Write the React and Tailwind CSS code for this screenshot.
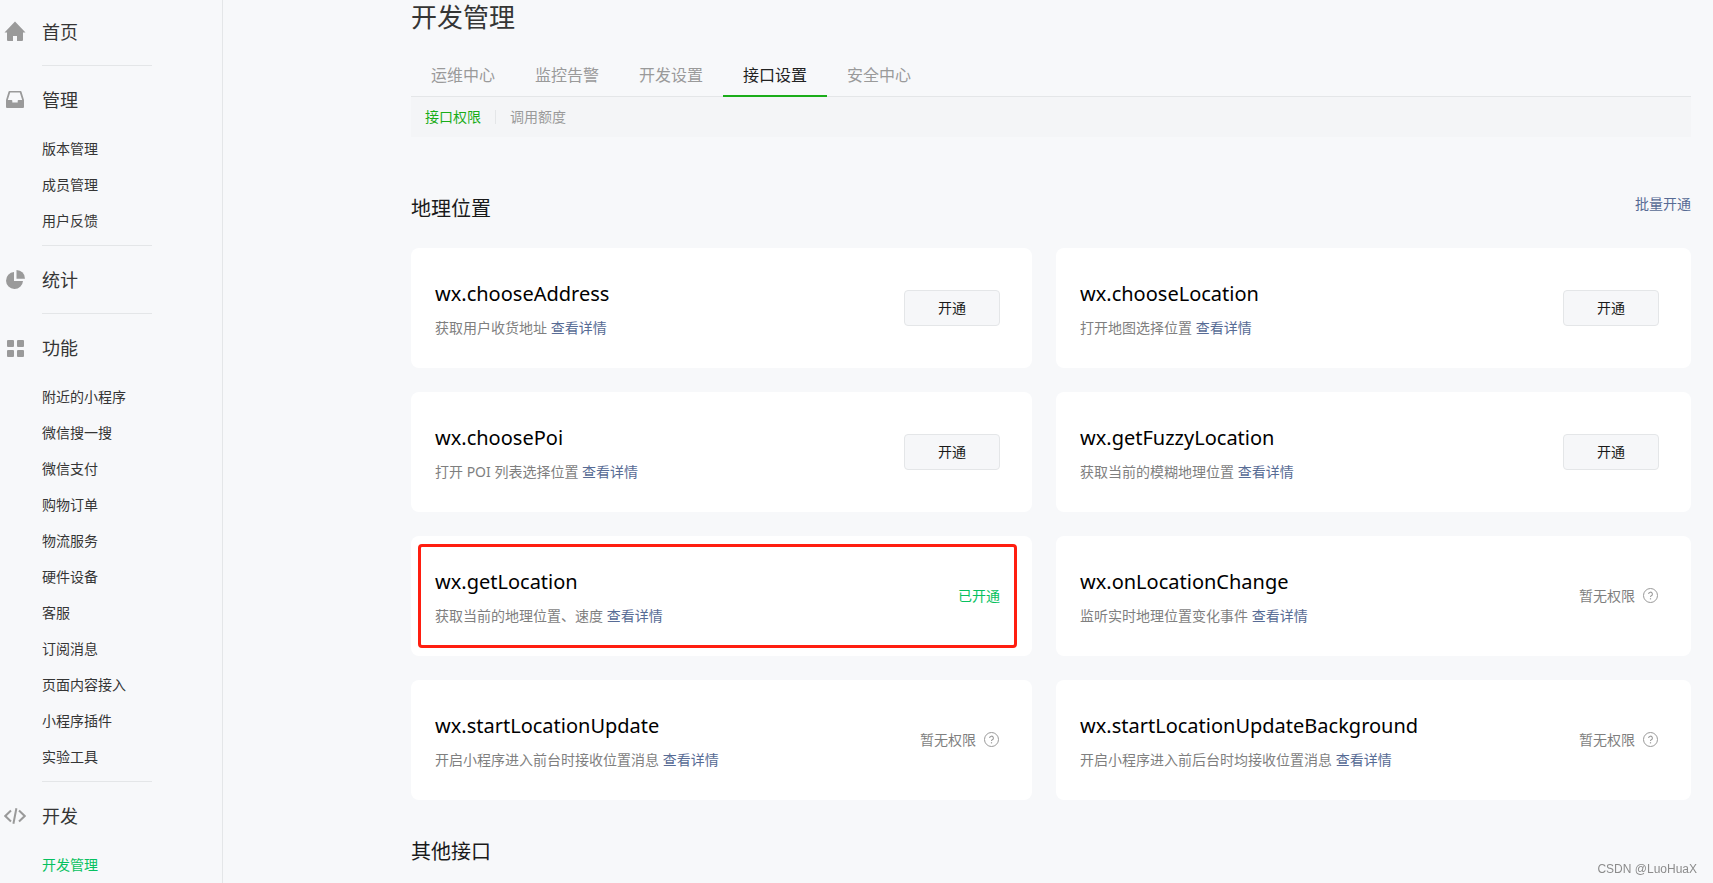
import React, { useState } from "react";

const menu = [
  { title: "首页", icon: HomeIcon, items: [] },
  { title: "管理", icon: InboxIcon, items: ["版本管理", "成员管理", "用户反馈"] },
  { title: "统计", icon: PieIcon, items: [] },
  {
    title: "功能",
    icon: GridIcon,
    items: [
      "附近的小程序",
      "微信搜一搜",
      "微信支付",
      "购物订单",
      "物流服务",
      "硬件设备",
      "客服",
      "订阅消息",
      "页面内容接入",
      "小程序插件",
      "实验工具",
    ],
  },
  { title: "开发", icon: CodeIcon, items: ["开发管理"] },
];

const tabs = ["运维中心", "监控告警", "开发设置", "接口设置", "安全中心"];

// status: "off" | "on" | "denied"
const apis = [
  { name: "wx.chooseAddress", desc: "获取用户收货地址", status: "off" },
  { name: "wx.chooseLocation", desc: "打开地图选择位置", status: "off" },
  { name: "wx.choosePoi", desc: "打开 POI 列表选择位置", status: "off" },
  { name: "wx.getFuzzyLocation", desc: "获取当前的模糊地理位置", status: "off" },
  { name: "wx.getLocation", desc: "获取当前的地理位置、速度", status: "on", marked: true },
  { name: "wx.onLocationChange", desc: "监听实时地理位置变化事件", status: "denied" },
  { name: "wx.startLocationUpdate", desc: "开启小程序进入前台时接收位置消息", status: "denied" },
  { name: "wx.startLocationUpdateBackground", desc: "开启小程序进入前后台时均接收位置消息", status: "denied" },
];

function HomeIcon() {
  return (
    <svg width="22" height="22" viewBox="0 0 22 22" fill="#9a9a9a">
      <path d="M11 .5 21.500 11.500H19V19a1 1 0 0 1-1 1h-5v-5H9v5H4a1 1 0 0 1-1-1v-7.500H.5z" />
    </svg>
  );
}

function InboxIcon() {
  return (
    <svg width="22" height="22" viewBox="0 0 22 22" fill="#9a9a9a" fillRule="evenodd">
      <path d="M5.500 2h11a1 1 0 0 1 1 .8L20 11v7a1 1 0 0 1-1 1H3a1 1 0 0 1-1-1v-7l2.500-8.200a1 1 0 0 1 1-.8zM6.200 3.500 3.800 11H7.500a.8.8 0 0 1 .8.8v1.700h5.400v-1.700a.8.8 0 0 1 .8-.8h3.700L15.800 3.500z" />
    </svg>
  );
}

function PieIcon() {
  return (
    <svg width="22" height="22" viewBox="0 0 22 22" fill="#9a9a9a">
      <path d="M10 3v9h9a8.500 8.500 0 1 1-9-9z" />
      <path d="M12.500 1A8.500 8.500 0 0 1 21 9.800h-8.500z" />
    </svg>
  );
}

function GridIcon() {
  return (
    <svg width="22" height="22" viewBox="0 0 22 22" fill="#9a9a9a">
      <rect x="3" y="3" width="7" height="7" rx="1" />
      <rect x="13" y="3" width="7" height="7" rx="1" />
      <rect x="3" y="13" width="7" height="7" rx="1" />
      <rect x="13" y="13" width="7" height="7" rx="1" />
    </svg>
  );
}

function CodeIcon() {
  return (
    <svg width="22" height="22" viewBox="0 0 22 22" fill="none" stroke="#9a9a9a" strokeWidth="2">
      <path d="M7 5.500 1.300 11 7 16.500M15 5.500l5.700 5.500-5.700 5.500M12.400 3.200l-3 15.600" />
    </svg>
  );
}

function HelpIcon() {
  return (
    <svg width="16" height="16" viewBox="0 0 16 16" fill="none" stroke="#9a9a9a">
      <circle cx="7.500" cy="7.500" r="7" />
      <path d="M5.600 6a1.900 1.900 0 1 1 2.700 1.800c-.6.300-.8.500-.8 1.200" strokeWidth="1.100" />
      <path d="M7.500 10.200v1.200" strokeWidth="1.200" />
    </svg>
  );
}

function Status({ status }) {
  if (status === "on") return <span className="text-sm text-[#07c160]">已开通</span>;
  if (status === "denied") {
    return (
      <span className="flex items-center gap-2 text-sm text-[#7f7f7f]">
        暂无权限 <HelpIcon />
      </span>
    );
  }
  return (
    <button className="h-9 w-24 rounded-sm border border-[#e4e6e8] bg-[#f6f7f9] text-sm text-[#1a1a1a]">
      开通
    </button>
  );
}

function ApiCard({ api }) {
  return (
    <div className="relative flex h-[120px] items-center justify-between rounded-lg bg-white pr-8 pl-6">
      <div className="pt-0.5">
        <h3 className="text-xl leading-8 text-black">{api.name}</h3>
        <p className="mt-1.5 text-sm leading-6 text-[#7f7f7f]">
          {api.desc} <a href="#" className="text-[#576b95]">查看详情</a>
        </p>
      </div>
      <Status status={api.status} />
      {api.marked && (
        <div className="pointer-events-none absolute inset-y-2 right-[15px] left-[7px] rounded-sm border-3 border-[#ff1e10]" />
      )}
    </div>
  );
}

export default function App() {
  const [tab, setTab] = useState("接口设置");

  return (
    <div className="flex h-screen bg-[#f7f8fa] font-['Noto_Sans','Noto_Sans_CJK_SC',sans-serif] text-[#353535]">
      {/* Sidebar */}
      <nav className="w-[223px] shrink-0 overflow-y-auto border-r border-[#e4e6e8] [scrollbar-width:none]">
        {menu.map(({ title, icon: Icon, items }) => (
          <section key={title} className="group pt-4 first:pt-[14px]">
            <a href="#" className="flex h-9 items-center gap-4 pl-1 text-lg">
              <Icon /> {title}
            </a>
            {items.length > 0 && (
              <ul className="mt-[13px] -mb-[9px] pl-[42px]">
                {items.map((item) => (
                  <li key={item}>
                    <a
                      href="#"
                      className={`block text-sm leading-9 ${item === "开发管理" ? "text-[#07c160]" : ""}`}
                    >
                      {item}
                    </a>
                  </li>
                ))}
              </ul>
            )}
            <div className="mt-[15px] ml-[42px] w-[110px] border-t border-[#e4e6e8] group-last:hidden" />
          </section>
        ))}
      </nav>

      {/* Content */}
      <main className="min-w-0 flex-1 overflow-y-auto pr-[22px] pl-[188px] [scrollbar-width:none]">
        <h1 className="text-[26px] leading-[34px]">开发管理</h1>

        <div className="mt-[18px] flex border-b border-[#e4e6e8]">
          {tabs.map((t) => (
            <button
              key={t}
              onClick={() => setTab(t)}
              className={`-mb-px h-[45px] border-b-2 px-5 pt-0.5 text-base ${
                t === tab ? "border-[#1aad19] text-[#222222]" : "border-transparent text-[#9a9a9a]"
              }`}
            >
              {t}
            </button>
          ))}
        </div>
        <div className="flex h-10 items-center bg-[#f4f5f7] px-[14px] text-sm">
          <a href="#" className="text-[#1aad19]">接口权限</a>
          <span className="mx-[14px] h-[14px] w-px bg-[#e4e6e8]" />
          <a href="#" className="text-[#9a9a9a]">调用额度</a>
        </div>

        <div className="mt-14 flex items-start justify-between">
          <h2 className="text-xl leading-8 text-[#1a1a1a]">地理位置</h2>
          <a href="#" className="text-sm leading-[22px] text-[#576b95]">批量开通</a>
        </div>

        <div className="mt-[23px] grid grid-cols-[621fr_635fr] gap-6">
          {apis.map((api) => (
            <ApiCard key={api.name} api={api} />
          ))}
        </div>

        <h2 className="mt-9 text-xl leading-8 text-[#1a1a1a]">其他接口</h2>
      </main>

      {/* Watermark */}
      <div className="fixed right-4 bottom-1 font-['Liberation_Sans',sans-serif] text-xs leading-5 text-[#8c8c8c]">
        CSDN @LuoHuaX
      </div>
    </div>
  );
}
